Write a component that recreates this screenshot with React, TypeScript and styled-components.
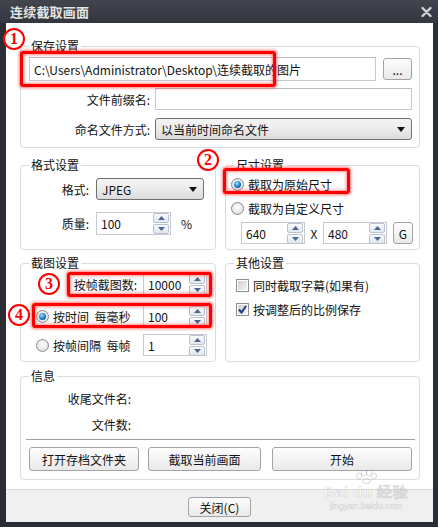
import React from "react";
import styled, { createGlobalStyle } from "styled-components";

const GlobalStyle = createGlobalStyle`
  html, body { margin: 0; padding: 0; background: #2b2d35; }
  body {
    font-family: "Noto Sans CJK SC", "Noto Sans", sans-serif;
    font-size: 12px;
    color: #111;
  }
  * { box-sizing: border-box; }
`;

const Window = styled.div`
  position: relative;
  width: 438px;
  height: 527px;
  background: #2b2d35;
  display: flex;
  flex-direction: column;
  padding-bottom: 5px;
  overflow: hidden;
`;

const TitleBar = styled.div`
  height: 23px;
  flex: none;
  display: flex;
  align-items: center;
  justify-content: space-between;
  padding: 0 6px 0 10px;
  background: linear-gradient(#43454e, #34363f);
`;

const Title = styled.span`
  font-size: 13px;
  font-weight: 700;
  color: #e4e4e4;
  letter-spacing: 0.2px;
`;

const Client = styled.div`
  flex: 1;
  margin: 0 5px 0 6px;
  display: flex;
  flex-direction: column;
`;

const Body = styled.div`
  height: 466px;
  background: #fff;
  padding: 23px 13px 0 14px;
  display: flex;
  flex-direction: column;
`;

const Footer = styled.div`
  flex: 1;
  background: #f0f0f0;
  border-top: 1px solid #d8d8d8;
  display: flex;
  justify-content: center;
  padding-top: 7px;
`;

const Group = styled.div<{ $h: number; $mt?: number }>`
  position: relative;
  height: ${(p) => p.$h}px;
  margin-top: ${(p) => p.$mt ?? 0}px;
  border: 1px solid #d6dde5;
  border-radius: 4px;
  display: flex;
  flex-direction: column;
`;

const Legend = styled.span`
  position: absolute;
  top: -8px;
  left: 8px;
  padding: 0 2px;
  line-height: 14px;
  background: #fff;
  font-size: 12px;
`;

const TwoCol = styled.div<{ $h: number; $mt: number }>`
  display: grid;
  grid-template-columns: 196px 195px;
  column-gap: 9px;
  height: ${(p) => p.$h}px;
  margin-top: ${(p) => p.$mt}px;
  & > ${Group} { height: 100%; }
`;

/* ---------- controls ---------- */

const TextBox = styled.div<{ $w?: number; $h: number }>`
  ${(p) => (p.$w ? `width: ${p.$w}px;` : "flex: 1;")}
  height: ${(p) => p.$h}px;
  border: 1px solid #c6cad0;
  border-top-color: #b9bdc3;
  background: #fff;
  display: flex;
  align-items: center;
  padding-left: 4px;
  white-space: nowrap;
  overflow: hidden;
`;

const Button = styled.button<{ $w: number; $h: number }>`
  width: ${(p) => p.$w}px;
  height: ${(p) => p.$h}px;
  flex: none;
  border: 1px solid #a3a3a3;
  border-radius: 3px;
  background: linear-gradient(#fdfdfd, #f3f3f3 50%, #e9e9e9);
  font-family: inherit;
  font-size: 12px;
  color: #111;
  padding: 0;
  display: flex;
  align-items: center;
  justify-content: center;
`;

const Select = styled.div<{ $w?: number }>`
  ${(p) => (p.$w ? `width: ${p.$w}px;` : "flex: 1;")}
  height: 22px;
  border: 1px solid #707070;
  border-radius: 3px;
  background: linear-gradient(#f4f4f4, #ebebeb 50%, #dcdcdc);
  display: flex;
  align-items: center;
  justify-content: space-between;
  padding: 0 6px 0 5px;
`;

const Arrow = () => (
  <svg width="8" height="5" viewBox="0 0 8 5">
    <path d="M0 0h8L4 5z" fill="#111" />
  </svg>
);

const SpinWrap = styled.div<{ $w: number; $h: number }>`
  width: ${(p) => p.$w}px;
  height: ${(p) => p.$h}px;
  flex: none;
  border: 1px solid #c6cad0;
  background: #fff;
  display: flex;
  align-items: center;
  padding: 0 1px 0 4px;
`;

const SpinValue = styled.span`
  flex: 1;
`;

const SpinCol = styled.div`
  width: 16px;
  display: flex;
  flex-direction: column;
  gap: 1px;
`;

const SpinBtn = styled.div`
  height: 10px;
  border: 1px solid #b9c2ce;
  border-radius: 2px;
  background: linear-gradient(#f8fafc, #e2e8ef);
  display: flex;
  align-items: center;
  justify-content: center;
`;

const Tri = ({ up }: { up?: boolean }) => (
  <svg width="7" height="4" viewBox="0 0 7 4">
    <path d={up ? "M0 4h7L3.5 0z" : "M0 0h7L3.5 4z"} fill="#4a6591" />
  </svg>
);

const Spin = ({ value, w, h = 22 }: { value: string; w: number; h?: number }) => (
  <SpinWrap $w={w} $h={h}>
    <SpinValue>{value}</SpinValue>
    <SpinCol>
      <SpinBtn>
        <Tri up />
      </SpinBtn>
      <SpinBtn>
        <Tri />
      </SpinBtn>
    </SpinCol>
  </SpinWrap>
);

const RadioCircle = styled.span<{ $on?: boolean }>`
  width: 13px;
  height: 13px;
  flex: none;
  border-radius: 50%;
  border: 1px solid #8a8a8a;
  background: radial-gradient(circle at 50% 40%, #ffffff, #e6e6e6 60%, #cfcfcf);
  display: flex;
  align-items: center;
  justify-content: center;
  &::after {
    content: "";
    display: ${(p) => (p.$on ? "block" : "none")};
    width: 7px;
    height: 7px;
    border-radius: 50%;
    background: radial-gradient(circle at 40% 35%, #9fe0ff, #1a78c2 55%, #0b3f78);
  }
`;

const CheckSquare = styled.span`
  width: 13px;
  height: 13px;
  flex: none;
  border: 1px solid #8e8f8f;
  background: #fff;
  padding: 1px;
  display: flex;
  & > i {
    flex: 1;
    background: linear-gradient(135deg, #d0d0d0, #f3f3f3);
    display: flex;
    align-items: center;
    justify-content: center;
  }
`;

const Option = styled.div<{ $gap?: number }>`
  display: flex;
  align-items: center;
  gap: ${(p) => p.$gap ?? 4}px;
  height: 16px;
  white-space: nowrap;
`;

const Radio = ({ on, children }: { on?: boolean; children: React.ReactNode }) => (
  <Option $gap={4}>
    <RadioCircle $on={on} />
    <span>{children}</span>
  </Option>
);

const Check = ({ on, children }: { on?: boolean; children: React.ReactNode }) => (
  <Option $gap={4}>
    <CheckSquare>
      <i>
        {on && (
          <svg width="9" height="9" viewBox="0 0 9 9">
            <path d="M1 4.5l2.5 3L8 1" stroke="#1c3a86" strokeWidth="2" fill="none" />
          </svg>
        )}
      </i>
    </CheckSquare>
    <span>{children}</span>
  </Option>
);

/* ---------- group internals ---------- */

const SaveInner = styled.div`
  padding: 10px 7px 0 8px;
  display: flex;
  flex-direction: column;
`;

const PathRow = styled.div`
  display: flex;
  align-items: center;
  gap: 7px;
  height: 24px;
`;

const FormGrid = styled.div`
  display: grid;
  grid-template-columns: 121px 1fr;
  grid-auto-rows: 22px;
  column-gap: 5px;
  row-gap: 8px;
  margin-top: 7px;
  align-items: center;
`;

const RightLabel = styled.span`
  text-align: right;
  white-space: nowrap;
`;

const FormatInner = styled.div`
  padding-top: 12px;
  display: flex;
  flex-direction: column;
  gap: 12px;
`;

const FieldRow = styled.div`
  display: flex;
  align-items: center;
  gap: 7px;
`;

const FieldLabel = styled.span<{ $w: number }>`
  width: ${(p) => p.$w}px;
  text-align: right;
  flex: none;
`;

const Unit = styled.span`
  margin-left: 3px;
`;

const SizeInner = styled.div`
  padding: 10px 0 0 5px;
  display: flex;
  flex-direction: column;
  gap: 8px;
`;

const SizeInputs = styled.div`
  display: flex;
  align-items: center;
  padding-left: 10px;
  margin-top: -2px;
  & > em {
    font-style: normal;
    width: 18px;
    text-align: center;
  }
`;

const CaptureInner = styled.div`
  padding: 9px 8px 0 15px;
  display: flex;
  flex-direction: column;
`;

const CaptureRow = styled.div<{ $mt?: number }>`
  display: grid;
  grid-template-columns: 1fr 64px;
  column-gap: 6px;
  align-items: center;
  height: 22px;
  margin-top: ${(p) => p.$mt ?? 0}px;
`;

const OtherInner = styled.div`
  padding: 13px 0 0 10px;
  display: flex;
  flex-direction: column;
  gap: 8px;
`;

const InfoInner = styled.div`
  padding: 13px 0 0 0;
  display: flex;
  flex-direction: column;
`;

const InfoRows = styled.div`
  display: grid;
  grid-template-columns: 110px;
  grid-auto-rows: 16px;
  row-gap: 10px;
  align-items: center;
`;

const Separator = styled.div`
  height: 1px;
  background: #a0a0a0;
  margin: 7px 4px 0 5px;
`;

const ButtonRow = styled.div`
  display: flex;
  margin-top: 7px;
  padding-left: 8px;
  gap: 9px;
  & > :last-child { margin-left: 2px; }
`;

/* ---------- annotations ---------- */

const Mark = styled.span<{ $x: number; $y: number; $d?: number }>`
  position: absolute;
  left: ${(p) => p.$x}px;
  top: ${(p) => p.$y}px;
  width: ${(p) => p.$d ?? 22}px;
  height: ${(p) => p.$d ?? 22}px;
  border: 2px solid #f00;
  border-radius: 50%;
  background: rgba(255, 255, 255, 0.85);
  color: #f00;
  font-family: "Liberation Serif", serif;
  font-weight: 700;
  font-size: 16px;
  line-height: 18px;
  text-align: center;
`;

const RedBox = styled.div<{ $x: number; $y: number; $w: number; $h: number }>`
  position: absolute;
  left: ${(p) => p.$x}px;
  top: ${(p) => p.$y}px;
  width: ${(p) => p.$w}px;
  height: ${(p) => p.$h}px;
  border: 3px solid #ff0000;
  border-radius: 3px;
  box-shadow: 0 0 3px 1px rgba(255, 0, 0, 0.55), inset 0 0 3px 1px rgba(255, 0, 0, 0.45);
  pointer-events: none;
`;

const Watermark = styled.div`
  position: absolute;
  left: 320px;
  top: 470px;
  width: 92px;
  display: flex;
  flex-direction: column;
  align-items: center;
  pointer-events: none;
  color: rgba(255, 255, 255, 0.5);
  -webkit-text-stroke: 0.6px rgba(160, 160, 160, 0.35);
  font-family: "Liberation Sans", sans-serif;
  font-weight: 700;
`;

const WmBig = styled.span`
  font-size: 15px;
  line-height: 16px;
  letter-spacing: 0.5px;
`;

const WmSmall = styled.span`
  font-size: 9px;
  line-height: 12px;
  font-weight: 400;
`;

export default function App() {
  return (
    <>
      <GlobalStyle />
      <Window>
        <TitleBar>
          <Title>连续截取画面</Title>
          <svg width="11" height="10" viewBox="0 0 11 10">
            <path d="M1.5 1l8 8M9.5 1l-8 8" stroke="#d2d3d6" strokeWidth="2.4" strokeLinecap="round" />
          </svg>
        </TitleBar>
        <Client>
          <Body>
            <Group $h={102}>
              <Legend>保存设置</Legend>
              <SaveInner>
                <PathRow>
                  <TextBox $h={24}>C:\Users\Administrator\Desktop\连续截取的图片</TextBox>
                  <Button $w={29} $h={22}>...</Button>
                </PathRow>
                <FormGrid>
                  <RightLabel>文件前缀名:</RightLabel>
                  <TextBox $h={22} />
                  <RightLabel>命名文件方式:</RightLabel>
                  <Select>
                    <span>以当前时间命名文件</span>
                    <Arrow />
                  </Select>
                </FormGrid>
              </SaveInner>
            </Group>

            <TwoCol $h={85} $mt={17}>
              <Group $h={85}>
                <Legend>格式设置</Legend>
                <FormatInner>
                  <FieldRow>
                    <FieldLabel $w={68}>格式:</FieldLabel>
                    <Select $w={108}>
                      <span>JPEG</span>
                      <Arrow />
                    </Select>
                  </FieldRow>
                  <FieldRow>
                    <FieldLabel $w={68}>质量:</FieldLabel>
                    <Spin value="100" w={75} h={23} />
                    <Unit>%</Unit>
                  </FieldRow>
                </FormatInner>
              </Group>
              <Group $h={85}>
                <Legend>尺寸设置</Legend>
                <SizeInner>
                  <Radio on>截取为原始尺寸</Radio>
                  <Radio>截取为自定义尺寸</Radio>
                  <SizeInputs>
                    <Spin value="640" w={64} />
                    <em>X</em>
                    <Spin value="480" w={64} />
                    <Button $w={20} $h={22} style={{ marginLeft: 6 }}>
                      G
                    </Button>
                  </SizeInputs>
                </SizeInner>
              </Group>
            </TwoCol>

            <TwoCol $h={99} $mt={13}>
              <Group $h={99}>
                <Legend>截图设置</Legend>
                <CaptureInner>
                  <CaptureRow>
                    <RightLabel>按帧截图数:</RightLabel>
                    <Spin value="10000" w={64} />
                  </CaptureRow>
                  <CaptureRow $mt={10}>
                    <Radio on>按时间&nbsp;&nbsp;每毫秒</Radio>
                    <Spin value="100" w={64} />
                  </CaptureRow>
                  <CaptureRow $mt={7}>
                    <Radio>按帧间隔&nbsp;&nbsp;每帧</Radio>
                    <Spin value="1" w={64} />
                  </CaptureRow>
                </CaptureInner>
              </Group>
              <Group $h={99}>
                <Legend>其他设置</Legend>
                <OtherInner>
                  <Check>同时截取字幕(如果有)</Check>
                  <Check on>按调整后的比例保存</Check>
                </OtherInner>
              </Group>
            </TwoCol>

            <Group $h={104} $mt={14}>
              <Legend>信息</Legend>
              <InfoInner>
                <InfoRows>
                  <RightLabel>收尾文件名:</RightLabel>
                  <RightLabel>文件数:</RightLabel>
                </InfoRows>
                <Separator />
                <ButtonRow>
                  <Button $w={110} $h={24}>打开存档文件夹</Button>
                  <Button $w={113} $h={24}>截取当前画面</Button>
                  <Button $w={140} $h={24}>开始</Button>
                </ButtonRow>
              </InfoInner>
            </Group>
          </Body>
          <Footer>
            <Button $w={63} $h={20}>关闭(C)</Button>
          </Footer>
        </Client>

        <RedBox $x={20} $y={51} $w={256} $h={36} />
        <RedBox $x={223} $y={168} $w={127} $h={26} />
        <RedBox $x={67} $y={272} $w={145} $h={25} />
        <RedBox $x={32} $y={303} $w={180} $h={25} />
        <Mark $x={3} $y={28}>1</Mark>
        <Mark $x={197} $y={149}>2</Mark>
        <Mark $x={38} $y={273}>3</Mark>
        <Mark $x={8} $y={304}>4</Mark>

        <Watermark>
          <svg width="24" height="14" viewBox="0 0 24 14">
            <g fill="none" stroke="rgba(160,160,160,0.4)" strokeWidth="1">
              <ellipse cx="5" cy="6" rx="2.5" ry="3" />
              <ellipse cx="10" cy="3" rx="2.5" ry="3" />
              <ellipse cx="15" cy="3" rx="2.5" ry="3" />
              <ellipse cx="20" cy="6" rx="2.5" ry="3" />
              <ellipse cx="12.5" cy="11" rx="4" ry="2.5" />
            </g>
          </svg>
          <WmBig>Bai du 经验</WmBig>
          <WmSmall>jingyan.baidu.com</WmSmall>
        </Watermark>
      </Window>
    </>
  );
}
